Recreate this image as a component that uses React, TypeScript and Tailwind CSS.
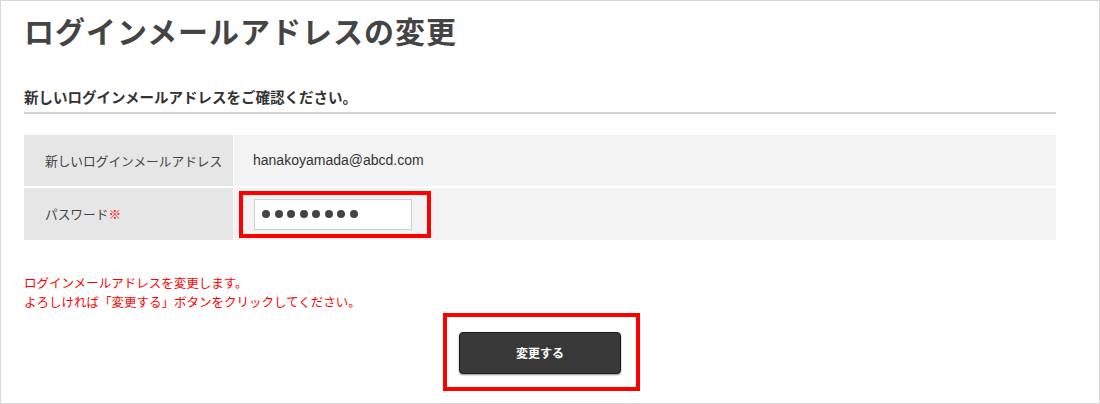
import React from "react";

const jp = { fontFamily: '"Noto Sans CJK JP", "Noto Sans", sans-serif' };

export default function App() {
  return (
    <div
      className="w-[1100px] h-[404px] bg-white border border-[#d9d9d9] pl-[23px] pr-[43px] pt-[14px] text-[#444]"
      style={jp}
    >
      <h1 className="text-[30px] leading-[30px] font-bold tracking-[1px] text-[#444]">
        ログインメールアドレスの変更
      </h1>

      <h2 className="mt-[45px] text-[14.5px] leading-[14px] font-bold text-[#333]">
        新しいログインメールアドレスをご確認ください。
      </h2>
      <div className="mt-[8px] h-[2px] bg-[#d4d4d4]" />

      <div className="mt-[21px] flex flex-col gap-[2px]">
        <div className="flex h-[51px] gap-[1px]">
          <div className="w-[209px] bg-[#e6e6e6] flex items-center pl-[21px] text-[12.7px] text-[#444]">
            新しいログインメールアドレス
          </div>
          <div
            className="flex-1 bg-[#f3f3f3] flex items-center pl-[19px] text-[14px] text-[#333]"
            style={{ fontFamily: '"Liberation Sans", "Noto Sans CJK JP", sans-serif' }}
          >
            hanakoyamada@abcd.com
          </div>
        </div>
        <div className="flex h-[52px] gap-[1px]">
          <div className="w-[209px] bg-[#e6e6e6] flex items-center pl-[21px] text-[12.7px] text-[#444]">
            パスワード<span className="text-[#ff0000]">※</span>
          </div>
          <div className="relative flex-1 bg-[#f3f3f3] flex items-center pl-[20px]">
            <div className="w-[158px] h-[31px] bg-white border border-[#cfcfcf] flex items-center pl-[7px] gap-[4.5px]">
              {Array.from({ length: 8 }).map((_, i) => (
                <span key={i} className="w-[8px] h-[8px] rounded-full bg-[#444]" />
              ))}
            </div>
            <div className="absolute left-[5px] top-[3px] w-[192px] h-[47px] border-4 border-[#ff0000]" />
          </div>
        </div>
      </div>

      <p className="mt-[33px] text-[12.5px] leading-[19px] text-[#ff0000]">
        ログインメールアドレスを変更します。
        <br />
        よろしければ「変更する」ボタンをクリックしてください。
      </p>

      <div className="mt-[21px] flex justify-center">
        <div className="relative">
          <button className="w-[162px] h-[42px] rounded-[4px] bg-[#383838] border border-[#1c1c1c] shadow-[0_1px_2px_rgba(0,0,0,0.45)] text-white text-[12px] font-bold">
            変更する
          </button>
          <div className="absolute left-[-16px] top-[-19px] w-[197px] h-[78px] border-4 border-[#ff0000] pointer-events-none" />
        </div>
      </div>
    </div>
  );
}
